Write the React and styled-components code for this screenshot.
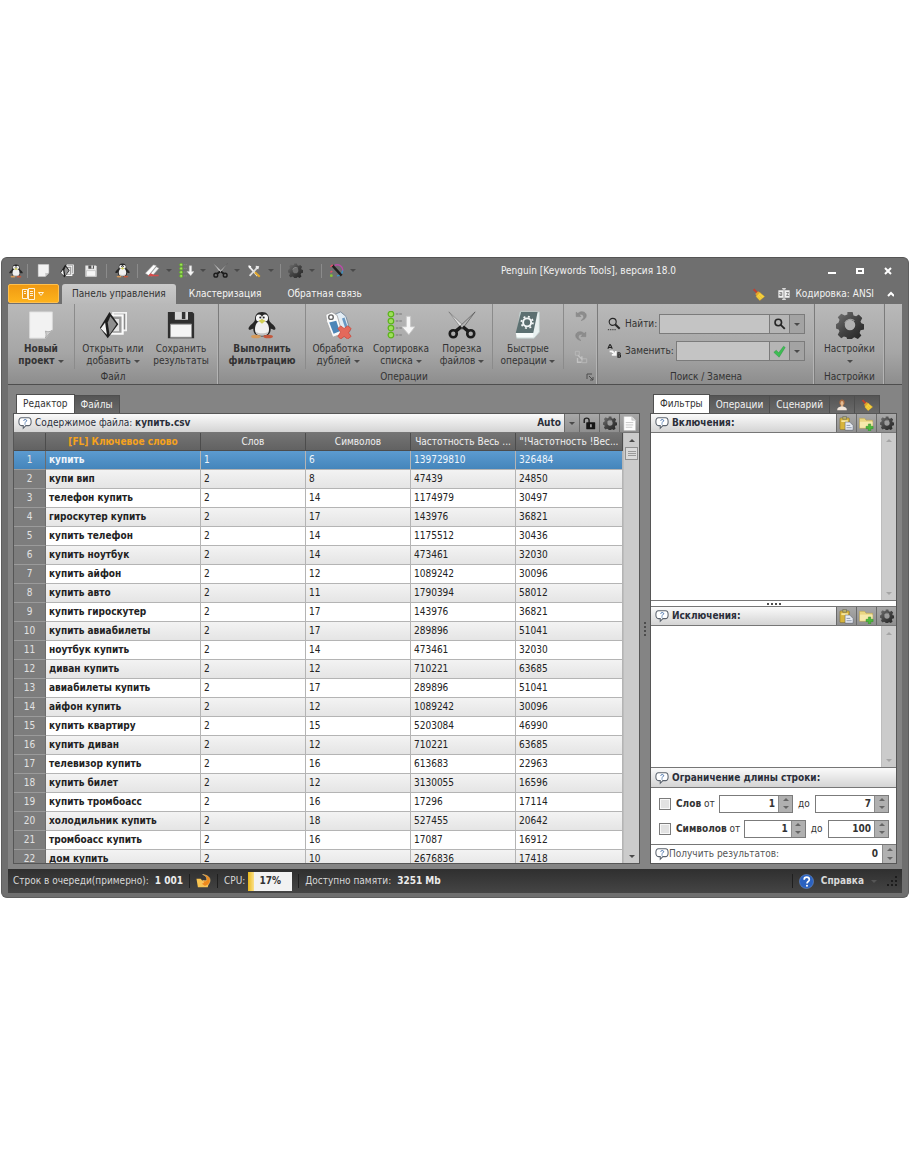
import { useState } from "react";
import styled, { createGlobalStyle, css } from "styled-components";

const GlobalStyle = createGlobalStyle`
  * {
    box-sizing: border-box;
  }
  body {
    margin: 0;
    background: #fff;
  }
  body, button, input, textarea {
    font-family: "DejaVu Sans Condensed", "DejaVu Sans", sans-serif;
    font-size: 10px;
    line-height: 12px;
  }
  button {
    margin: 0;
    padding: 0;
    border: 0;
    background: none;
    color: inherit;
  }
  svg {
    display: block;
    flex: none;
  }
`;

const KEYWORDS = [
  ["купить", 1, 6, 139729810, 326484],
  ["купи вип", 2, 8, 47439, 24850],
  ["телефон купить", 2, 14, 1174979, 30497],
  ["гироскутер купить", 2, 17, 143976, 36821],
  ["купить телефон", 2, 14, 1175512, 30436],
  ["купить ноутбук", 2, 14, 473461, 32030],
  ["купить айфон", 2, 12, 1089242, 30096],
  ["купить авто", 2, 11, 1790394, 58012],
  ["купить гироскутер", 2, 17, 143976, 36821],
  ["купить авиабилеты", 2, 17, 289896, 51041],
  ["ноутбук купить", 2, 14, 473461, 32030],
  ["диван купить", 2, 12, 710221, 63685],
  ["авиабилеты купить", 2, 17, 289896, 51041],
  ["айфон купить", 2, 12, 1089242, 30096],
  ["купить квартиру", 2, 15, 5203084, 46990],
  ["купить диван", 2, 12, 710221, 63685],
  ["телевизор купить", 2, 16, 613683, 22963],
  ["купить билет", 2, 12, 3130055, 16596],
  ["купить тромбоасс", 2, 16, 17296, 17114],
  ["холодильник купить", 2, 18, 527455, 20642],
  ["тромбоасс купить", 2, 16, 17087, 16912],
  ["дом купить", 2, 10, 2676836, 17418],
];

/* ---------- icons ---------- */

const Svg = ({ size = 32, box = 32, children }) => (
  <svg width={size} height={size} viewBox={`0 0 ${box} ${box}`} aria-hidden="true">
    {children}
  </svg>
);

const Penguin = ({ size }) => (
  <Svg size={size}>
    <path d="M16 1c-6 0-8 4-8 8 0 3-2 4-5 7-2 2-3 4-2 5s3 0 5-1c0 6 3 9 10 9s10-3 10-9c2 1 4 2 5 1s0-3-2-5c-3-3-5-4-5-7 0-4-2-8-8-8z" fill="#262626" />
    <path d="M16 11c-6 0-8 5-8 10 0 5 3 7 8 7s8-2 8-7c0-5-2-10-8-10z" fill="#f0f0f0" />
    <path d="M9 24c1 3 4 4 7 4s6-1 7-4c-4 2-10 2-14 0z" fill="#c2c2c2" />
    <ellipse cx="12.5" cy="8" rx="3.4" ry="4" fill="#f6f6f6" />
    <ellipse cx="19.5" cy="8" rx="3.4" ry="4" fill="#f6f6f6" />
    <circle cx="14" cy="7.5" r="1.1" fill="#222" />
    <circle cx="18" cy="7.5" r="1.1" fill="#222" />
    <path d="M12 11l4-2 4 2-4 3.5z" fill="#d2cf55" />
    <ellipse cx="9" cy="29" rx="5.5" ry="2" fill="#d59a5a" />
    <ellipse cx="23" cy="29" rx="5.5" ry="2" fill="#c4583c" />
  </Svg>
);

const Page = ({ size }) => (
  <Svg size={size}>
    <path d="M3 1h26v21l-8 9H3z" fill="#f2f2f2" stroke="#dadada" />
    <path d="M29 22l-8 9c1-3 1-5 0-8 3 1 5 1 8-1z" fill="#cfcfcf" stroke="#a5a5a5" />
  </Svg>
);

const Folder = ({ size }) => (
  <Svg size={size}>
    <path d="M16 2h15v20H16z" fill="#8a8a8a" stroke="#f2f2f2" strokeWidth="2" />
    <path d="M14 5h13v21H14z" fill="#9b9b9b" stroke="#fafafa" strokeWidth="2.5" />
    <path d="M16 9h7v14h-7z" fill="#e6e6e6" />
    <path d="M12 1l10 14-12 16L1 19z" fill="#1e1e1e" />
    <path d="M13 6l7 9-8 12-2-14z" fill="#8f8f8f" />
    <path d="M2 20l5-7 2 14z" fill="#f2f2f2" />
  </Svg>
);

const Floppy = ({ size, light }) => (
  <Svg size={size}>
    <path d="M1 1h28l2 2v28H1z" fill={light ? "#e8e8e8" : "#2f2f2f"} />
    <path d="M9 1h15v9H9z" fill={light ? "#555" : "#d8d8d8"} />
    <path d="M17 1h4v8h-4z" fill={light ? "#eee" : "#333"} />
    <path d="M4 15h24v15H4z" fill="#f5f5f5" stroke="#999" />
  </Svg>
);

const Tags = ({ size }) => (
  <Svg size={size}>
    <path d="M12 4l7-3 6 5 5 17-9 4z" fill="#e2ecf4" stroke="#76879a" />
    <path d="M2 4l7-3 6 4 6 21-11 4L3 12z" fill="#fafafa" stroke="#a8a8a8" />
    <circle cx="8" cy="7" r="2.6" fill="#fff" stroke="#666" strokeWidth="1.6" />
    <path d="M6 13l8-2 4 12-7 3z" fill="#4d86b8" />
    <path d="M22 8l4 12" stroke="#6898c4" strokeWidth="3" />
    <path d="M16 20l3-3 4 3 4-3 4 3-3 5 3 4-4 3-4-3-4 3-3-3 3-5z" fill="#e4695b" stroke="#cb4f43" />
  </Svg>
);

const SortList = ({ size }) => (
  <Svg size={size}>
    {[3.5, 11.5, 19.5, 27.5].map((y) => (
      <g key={y}>
        <circle cx="4.5" cy={y} r="3.2" fill="#9fe05c" stroke="#5cb31d" strokeWidth="1.4" />
        <path d={`M10 ${y}h7`} stroke="#8a8a8a" strokeWidth="1.6" strokeDasharray="3 1" />
      </g>
    ))}
    <path d="M22 6h5v12h5l-7 9-8-9h5z" fill="#f6f6f6" stroke="#c4c4c4" />
  </Svg>
);

const Scissors = ({ size }) => (
  <Svg size={size}>
    <path d="M1 1l18 17-3 3z" fill="#e0e0e0" stroke="#777" strokeWidth=".8" />
    <path d="M31 1L13 18l3 3z" fill="#b5b5b5" stroke="#555" strokeWidth=".8" />
    <path d="M17 18l6 5M15 18l-6 5" stroke="#1c1c1c" strokeWidth="4" />
    <ellipse cx="6" cy="26" rx="4" ry="4" fill="none" stroke="#1c1c1c" strokeWidth="3" />
    <ellipse cx="26" cy="26" rx="4" ry="4" fill="none" stroke="#1c1c1c" strokeWidth="3" />
  </Svg>
);

const Script = ({ size }) => (
  <Svg size={size}>
    <path d="M7 1h22v23l-6 7H3z" fill="#e9f1f0" stroke="#c0cfcd" />
    <path d="M8 1h19l-5 24H2z" fill="#5c7071" />
    <path d="M2 25h20v5H3z" fill="#f7fbfa" />
    <circle cx="15" cy="13" r="4.6" fill="none" stroke="#f4f8f8" strokeWidth="2.2" />
    <circle cx="15" cy="13" r="6.6" fill="none" stroke="#f4f8f8" strokeWidth="2" strokeDasharray="2.2 3" />
  </Svg>
);

const Gear = ({ size }) => (
  <Svg size={size}>
    <linearGradient id="steel" x1="0" y1="0" x2="1" y2="1">
      <stop offset="0" stopColor="#747474" />
      <stop offset=".5" stopColor="#424242" />
      <stop offset="1" stopColor="#222" />
    </linearGradient>
    <path
      d="M13 1h6l1 4 3 1 3-2 4 4-2 4 1 2 3 1v6l-4 1-1 3 2 3-4 4-4-2-2 1-1 2h-5l-1-3-3-1-3 2-4-4 2-4-1-2-3-1v-5l3-2 1-3-2-3 4-4 4 2 3-1zM16 10a6 6 0 1 0 0 12 6 6 0 1 0 0-12z"
      fill="url(#steel)"
      fillRule="evenodd"
    />
    <path d="M10 14a7 7 0 0 1 11-3" fill="none" stroke="#a8a8a8" strokeWidth="1.2" />
  </Svg>
);

const Eraser = ({ size }) => (
  <Svg size={size}>
    <path d="M1 22L18 4l6 2L8 26z" fill="#fff" stroke="#ccc" />
    <path d="M9 26L24 8l6 3-15 17z" fill="#f3f3f3" stroke="#888" />
    <path d="M6 28l6-6 7 3h10v3H16z" fill="#d64b4b" />
  </Svg>
);

const Tools = ({ size }) => (
  <Svg size={size}>
    <path d="M4 5l20 22" stroke="#ededed" strokeWidth="4" />
    <path d="M3 3l7 2-4 5z" fill="#fff" />
    <path d="M6 27L22 10" stroke="#dcdcdc" strokeWidth="4" />
    <path d="M20 4l8 1-2 7-6-1z" fill="#e8e8e8" />
    <path d="M18 19l11 10" stroke="#e0a72e" strokeWidth="5" />
  </Svg>
);

const Wand = ({ size }) => (
  <Svg size={size}>
    <path d="M12 5a12 11 0 0 1 17 12" fill="none" stroke="#ba4ba8" strokeWidth="3" />
    <path d="M29 16a11 11 0 0 1-12 11" fill="none" stroke="#3d91c4" strokeWidth="3" />
    <path d="M7 5l20 22" stroke="#202020" strokeWidth="5" />
    <path d="M3 8l5-4M3 20l4-3" stroke="#e74b69" strokeWidth="3" />
    <circle cx="5" cy="27" r="3" fill="#88c337" />
  </Svg>
);

const Broom = ({ size }) => (
  <Svg size={size}>
    <path d="M4 3l9 9" stroke="#c2402f" strokeWidth="5" />
    <path d="M15 8l7 5-9 9-5-7z" fill="#e3a02c" />
    <path d="M19 11l12 10-12 10-9-10z" fill="#f7d23c" stroke="#d9a428" />
    <path d="M14 20l6 7M18 17l6 7" stroke="#d9a428" />
  </Svg>
);

const Person = ({ size }) => (
  <Svg size={size}>
    <ellipse cx="16" cy="9" rx="7" ry="8" fill="#a8693f" />
    <ellipse cx="16" cy="11" rx="4" ry="6" fill="#e2bb92" />
    <path d="M13 15h6v6h-6z" fill="#d9a97c" />
    <path d="M3 30c0-7 5-9 10-10h6c5 1 10 3 10 10z" fill="#f1e6dc" />
  </Svg>
);

const Help = ({ size = 14 }) => (
  <Svg size={size} box={16}>
    <path d="M4 2h8c2 0 3 2 3 4.500s-1 4.500-3 4.500H9l-3 3v-3H4c-2 0-3-2-3-4.500S2 2 4 2z" fill="#fff" stroke="#5b636e" strokeWidth="1.200" />
    <path d="M6.500 5.500c0-2 3.500-2 3.500 0 0 1-2 1-2 2" fill="none" stroke="#3f6ca8" />
    <circle cx="8" cy="9" r=".7" fill="#3f6ca8" />
  </Svg>
);

const Clipboard = ({ size }) => (
  <Svg size={size}>
    <rect x="2" y="4" width="20" height="25" rx="2" fill="#d8b53c" stroke="#7b651d" />
    <path d="M8 1h8v6H8z" fill="#b8b06b" stroke="#555" />
    <path d="M5 9h14v4H5z" fill="#f7e7a0" />
    <path d="M13 13h10l7 7v10H13z" fill="#e9edf4" stroke="#4f586c" />
    <path d="M16 20h8M16 25h11" stroke="#8893aa" strokeWidth="2" />
  </Svg>
);

const FolderAdd = ({ size }) => (
  <Svg size={size}>
    <path d="M1 5h11l3 4h14v17H1z" fill="#ead682" stroke="#b89e45" />
    <path d="M2 12h27v13H2z" fill="#f6e9ac" />
    <path d="M20 17h5v5h5v5h-5v5h-5v-5h-5v-5h5z" fill="#4cb83b" stroke="#2f8b26" />
  </Svg>
);

const Lock = ({ size }) => (
  <Svg size={size}>
    <path d="M3 15V8c0-7 12-7 12 0v7" fill="none" stroke="#202020" strokeWidth="3.5" />
    <rect x="8" y="13" width="22" height="17" rx="1" fill="#151515" />
    <path d="M18 18h3v7h-3z" fill="#ddd" />
  </Svg>
);

const Doc = ({ size }) => (
  <Svg size={size}>
    <path d="M4 1h17l8 8v22H4z" fill="#fdfdfd" stroke="#bbb" />
    <path d="M21 1v8h8" fill="#ddd" stroke="#aaa" />
    <path d="M8 14h16M8 19h16M8 24h14" stroke="#c5c5c5" strokeWidth="2" />
  </Svg>
);

const Loupe = ({ size, dots }) => (
  <Svg size={size}>
    <circle cx="13" cy="11" r="8" fill="none" stroke="#262626" strokeWidth={dots ? 2.6 : 4} />
    <path d="M19 17l10 10" stroke="#262626" strokeWidth="4.5" />
    {dots && <path d="M2 29h20" stroke="#262626" strokeWidth="2" strokeDasharray="3 2" />}
  </Svg>
);

const Replace = ({ size }) => (
  <Svg size={size}>
    <path d="M2 11l4-9h2l4 9M4 8h6" fill="none" stroke="#222" strokeWidth="2.5" />
    <path d="M6 15h7l5 5v-4h4v11H11v-4h4l-5-4H6z" fill="#f7f7f7" />
    <path d="M25 20h3c3 0 3 5 0 5h-3zM25 25h4c3 0 3 5 0 5h-4z" fill="none" stroke="#222" strokeWidth="2.5" />
  </Svg>
);

const Check = ({ size }) => (
  <Svg size={size}>
    <path d="M2 18l6-5 6 6L26 3l4 3-15 24z" fill="#3ebd54" stroke="#219039" />
  </Svg>
);

const Undo = ({ size, flip }) => (
  <Svg size={size}>
    <path
      d="M5 5v10h11l-4-4c6-3 11 1 10 6-1 3-3 5-6 7 7-1 13-6 12-13C26 3 15 1 9 8z"
      fill="#8d8d8d"
      stroke="#7d7d7d"
      transform={flip ? undefined : "translate(32 0) scale(-1 1)"}
    />
  </Svg>
);

const Swap = ({ size }) => (
  <Svg size={size}>
    <path d="M3 3h9v9H3zM18 20h11v9H18z" fill="none" stroke="#b9b9b9" strokeWidth="2" />
    <path d="M9 12l9 9v-7M8 18v10h9" fill="none" stroke="#c2c2c2" strokeWidth="3" />
  </Svg>
);

const CodePage = ({ size }) => (
  <Svg size={size}>
    <path d="M1 6h13v20H1zM18 6h13v20H18z" fill="#f0f0f0" />
    <path d="M16 2v28M11 2h10M11 30h10" stroke="#fff" strokeWidth="2.5" />
    <path d="M4 12h6v8H5v-4h5M22 12h6l-5 8h6" fill="none" stroke="#666" strokeWidth="2" />
  </Svg>
);

const AppMenu = () => (
  <svg width="23" height="12" viewBox="0 0 23 12" aria-hidden="true">
    <path d="M.5 1.500h5v9h-5zM6.500 .5h6v11h-6z" fill="#ee9a15" stroke="#fff3d8" />
    <path d="M8 3.500h3M8 5.500h3M8 7.500h3" stroke="#fff3d8" />
    <path d="M2 3.500h2M2 5.500h2" stroke="#fff3d8" />
    <path d="M16.500 4.500h5l-2.500 3z" fill="#f2a627" stroke="#fff3d8" />
  </svg>
);

const Run = ({ size }) => (
  <Svg size={size}>
    <path d="M1 10h9l3 4h16l-4 14H4z" fill="#f8c451" />
    <path d="M14 1c10 1 17 6 16 14-1 6-5 10-11 11l-9-6 6-1-1-5c5 2 8 1 8-3 0-5-4-8-9-10z" fill="#ee8a1c" stroke="#ffd98a" />
  </Svg>
);

const HelpBall = ({ size }) => (
  <Svg size={size}>
    <circle cx="16" cy="16" r="15" fill="#2b62c0" stroke="#7da3e0" />
    <path d="M11 12c0-7 11-7 11 0 0 4-5 4-5 8" fill="none" stroke="#fff" strokeWidth="3.5" />
    <circle cx="17" cy="25" r="2.2" fill="#fff" />
  </Svg>
);

const Launcher = () => (
  <svg width="8" height="8" viewBox="0 0 8 8" aria-hidden="true">
    <path d="M1 6V1h5M3 3l4 4M7 4v3H4" fill="none" stroke="#4c4c4c" />
  </svg>
);

const SizeGrip = () => (
  <svg width="10" height="10" viewBox="0 0 10 10" aria-hidden="true">
    <path d="M8 0h2v2H8zM4 4h2v2H4zM8 4h2v2H8zM0 8h2v2H0zM4 8h2v2H4zM8 8h2v2H8z" fill="#1c1c1c" />
  </svg>
);

/* ---------- window frame ---------- */

const Screen = styled.main`
  padding: 257px 1px;
`;

const Frame = styled.div`
  padding: 0 6px 4px;
  border-radius: 6px;
  border: 1px solid #5e5e5e;
  border-top-color: #555;
  background: #6f6f6f;
  color: #f2f2f2;
  overflow: hidden;
`;

const TitleBar = styled.header`
  display: flex;
  align-items: center;
  height: 25px;
`;

const QuickBar = styled.div`
  display: flex;
  align-items: center;
`;

const QuickButton = styled.button`
  display: flex;
  align-items: center;
  justify-content: center;
  width: ${(p) => (p.$menu ? 22 : 24)}px;
  height: 20px;
  &:first-child {
    width: 16px;
  }
`;

const Arrow = styled.i`
  display: inline-block;
  border: solid transparent;
  border-width: ${(p) => (p.$up ? "0 3px 3px" : "3px 3px 0")};
  border-top-color: ${(p) => p.$color || "#4a4a4a"};
  border-bottom-color: ${(p) => p.$color || "#4a4a4a"};
  vertical-align: middle;
`;

const QuickArrow = styled.button`
  width: 12px;
  height: 20px;
  line-height: 10px;
`;

const Divider = styled.span`
  width: 1px;
  height: 14px;
  margin: 0 3px;
  background: #8b8b8b;
`;

const WindowTitle = styled.h1`
  flex: 1;
  margin: 0;
  font-size: 10px;
  font-weight: 400;
  text-align: center;
`;

const WindowButtons = styled.div`
  display: flex;
`;

const WindowButton = styled.button`
  display: flex;
  align-items: center;
  justify-content: center;
  width: 28px;
  height: 20px;
`;

const TabBar = styled.nav`
  display: flex;
  align-items: flex-end;
  height: 21px;
`;

const AppButton = styled.button`
  display: flex;
  align-items: center;
  justify-content: center;
  width: 51px;
  height: 19px;
  margin: 0 3px 1px 0;
  border: 1px solid #ffc04d;
  border-radius: 2px;
  background: linear-gradient(#f09a12, #fdb21c);
`;

const RibbonTab = styled.button`
  height: 20px;
  padding: 0 ${(p) => (p.$active ? 10 : 13)}px;
  border-radius: 3px 3px 0 0;
  color: #f4f4f4;
  ${(p) =>
    p.$active &&
    css`
      color: #333;
      background: linear-gradient(#cacaca, #b9b9b9);
    `}
`;

const TabTools = styled.div`
  display: flex;
  align-items: center;
  gap: 5px;
  height: 20px;
  margin-left: auto;
  padding-right: 4px;
`;

const ToolLink = styled.button`
  display: flex;
  align-items: center;
  gap: 5px;
  padding: 0 4px;
`;

/* ---------- ribbon ---------- */

const Ribbon = styled.section`
  display: flex;
  height: 81px;
  border-bottom: 1px solid #4e4e4e;
  background: linear-gradient(#b9b9b9, #a6a6a6 60%, #8d8d8d);
  color: #333;
`;

const Group = styled.div`
  display: flex;
  flex-direction: column;
  width: ${(p) => p.$width}px;
  border-right: 1px solid #7b7b7b;
  box-shadow: inset -1px 0 #b4b4b4;
`;

const GroupBody = styled.div`
  display: flex;
  flex: 1;
`;

const GroupCaption = styled.div`
  display: flex;
  align-items: center;
  height: 15px;
  padding: 0 3px;
  span {
    flex: 1;
    text-align: center;
  }
`;

const BigButton = styled.button`
  display: flex;
  flex-direction: column;
  align-items: center;
  gap: 4px;
  width: ${(p) => p.$width}px;
  padding-top: 7px;
  font-weight: ${(p) => (p.$bold ? 700 : 400)};
  white-space: nowrap;
  ${(p) =>
    p.$split &&
    css`
      border-right: 1px solid #8b8b8b;
    `}
`;

const Label = styled.span`
  line-height: 12px;
`;

const UndoColumn = styled.div`
  display: flex;
  flex: 1;
  flex-direction: column;
  align-items: center;
  gap: 6px;
  padding-top: 6px;
`;

const SearchForm = styled.div`
  display: flex;
  flex: 1;
  flex-direction: column;
  gap: 7px;
  padding: 10px 9px 0;
`;

const SearchRow = styled.div`
  display: flex;
  align-items: center;
  height: 20px;
  label {
    margin: 0 2px 0 4px;
  }
`;

const SearchInput = styled.input`
  flex: 1;
  min-width: 0;
  height: 20px;
  border: 1px solid #7b7b7b;
  background: #c4c4c4;
`;

const SearchButton = styled.button`
  display: flex;
  align-items: center;
  justify-content: center;
  width: ${(p) => (p.$small ? 15 : 20)}px;
  height: 20px;
  border: 1px solid #7b7b7b;
  border-left: 0;
  background: ${(p) => (p.$small ? "#a3a3a3" : "#b5b5b5")};
`;

/* ---------- work area ---------- */

const Work = styled.div`
  display: flex;
  padding: 9px 5px 5px;
  background: #848484;
`;

const EditorPane = styled.section`
  flex: 1;
  min-width: 0;
`;

const Splitter = styled.div`
  display: flex;
  align-items: center;
  justify-content: center;
  width: 10px;
`;

const SidePane = styled.section`
  width: 247px;
`;

const Tabs = styled.div`
  display: flex;
  align-items: flex-end;
  height: 19px;
  padding-left: 3px;
`;

const Tab = styled.button`
  display: flex;
  align-items: center;
  justify-content: center;
  height: ${(p) => (p.$active ? 19 : 18)}px;
  padding: 0 6px;
  border: 1px solid #4f4f4f;
  border-bottom: 0;
  border-left-width: ${(p) => (p.$active ? 1 : 0)}px;
  background: ${(p) => (p.$active ? "#fff" : "linear-gradient(#555, #6a6a6a)")};
  color: ${(p) => (p.$active ? "#333" : "#f2f2f2")};
`;

const Box = styled.div`
  height: 451px;
  border: 1px solid #565656;
  background: #fff;
  color: #333;
  overflow: hidden;
`;

const SideBox = styled(Box)`
  display: flex;
  flex-direction: column;
`;

const PanelHead = styled.div`
  display: flex;
  flex: none;
  align-items: center;
  gap: 3px;
  height: ${(p) => (p.$ruled ? 21 : 19)}px;
  padding-left: 4px;
  border-top: ${(p) => (p.$ruled ? 1 : 0)}px solid #767676;
  border-bottom: 1px solid #767676;
  background: linear-gradient(#fafafa, #d4d4d4);
  color: #2b2f3a;
`;

const HeadText = styled.div`
  flex: 1;
  font-weight: ${(p) => (p.$bold ? 700 : 400)};
`;

const HeadTools = styled.div`
  display: flex;
  height: 100%;
`;

const HeadButton = styled.button`
  display: flex;
  align-items: center;
  justify-content: center;
  width: ${(p) => (p.$small ? 15 : 20)}px;
  border-left: 1px solid #6a6a6a;
  background: linear-gradient(#a8a8a8, #8f8f8f);
`;

const TableArea = styled.div`
  display: flex;
  height: 430px;
`;

const TableClip = styled.div`
  flex: 1;
  min-width: 0;
  overflow: hidden;
`;

const Table = styled.table`
  width: 100%;
  table-layout: fixed;
  border-collapse: separate;
  border-spacing: 0;
`;

const HeadCell = styled.th`
  height: 18px;
  padding: 0 3px;
  border-right: 1px solid #4c4c4c;
  border-bottom: 1px solid #4c4c4c;
  background: linear-gradient(#747474, #626262);
  color: ${(p) => (p.$accent ? "#f5a21d" : "#f0f0f0")};
  font-weight: ${(p) => (p.$accent ? 700 : 400)};
  text-align: center;
  white-space: nowrap;
`;

const Row = styled.tr`
  height: 19px;
  background: ${(p) => (p.$even ? "linear-gradient(#f3f3f3, #e4e4e4)" : "#fff")};
  color: #222;
  ${(p) =>
    p.$selected &&
    css`
      background: linear-gradient(#5c9bd0, #4384ba);
      color: #eef5fb;
    `}
`;

const Cell = styled.td`
  padding: 0 3px;
  border-right: 1px solid #b4b4b4;
  border-bottom: 1px solid #b4b4b4;
  font-weight: ${(p) => (p.$bold ? 700 : 400)};
`;

const RowNumber = styled.th`
  padding: 0;
  border-right: 1px solid #6c6c6c;
  border-bottom: 1px solid #9b9b9b;
  background: ${(p) => (p.$selected ? "transparent" : "#7d7d7d")};
  color: #e2e2e2;
  font-weight: 400;
  text-align: center;
`;

const ScrollBar = styled.div`
  display: flex;
  flex: none;
  flex-direction: column;
  justify-content: space-between;
  width: ${(p) => p.$width || 16}px;
  background: #cbcbcb;
  border-left: 1px solid #bdbdbd;
`;

const ScrollButton = styled.button`
  width: 100%;
  height: 14px;
  line-height: 8px;
`;

const Thumb = styled.div`
  display: flex;
  align-items: center;
  justify-content: center;
  height: 13px;
  margin: 0 1px;
  border: 1px solid #8f8f8f;
  background: #dadada;
`;

const EditArea = styled.div`
  display: flex;
  flex: ${(p) => p.$grow};
  min-height: 0;
  textarea {
    flex: 1;
    min-width: 0;
    border: 0;
    resize: none;
    outline: 0;
  }
`;

const Grip = styled.div`
  display: flex;
  flex: none;
  align-items: center;
  justify-content: center;
  height: 7px;
  border: solid #767676;
  border-width: 1px 0;
`;

const Limits = styled.div`
  display: flex;
  flex: none;
  flex-direction: column;
  gap: 6px;
  padding: 6px 7px;
  border-bottom: 1px solid #767676;
`;

const LimitRow = styled.div`
  display: flex;
  align-items: center;
  height: 19px;
`;

const CheckLabel = styled.label`
  display: flex;
  flex: none;
  align-items: center;
  gap: 3px;
`;

const CheckBox = styled.input`
  appearance: none;
  width: 12px;
  height: 12px;
  margin: 0 2px 0 1px;
  border: 1px solid #7b7b7b;
  background: #e2e2e2;
  box-shadow: inset 0 0 0 1px #f8f8f8;
`;

const To = styled.span`
  margin: 0 5px;
`;

const SpinBox = styled.div`
  display: flex;
  flex: 1;
  min-width: 0;
  height: 18px;
  margin-left: ${(p) => (p.$gap ? 4 : 0)}px;
  border: 1px solid #7b7b7b;
  input {
    flex: 1;
    width: 0;
    min-width: 0;
    padding: 0 3px;
    border: 0;
    background: #fff;
    color: #333;
    font-weight: 700;
    text-align: right;
  }
`;

const SpinButtons = styled.div`
  display: flex;
  flex-direction: column;
  width: 14px;
  border-left: 1px solid #8b8b8b;
  background: #b0b0b0;
  button {
    flex: 1;
    line-height: 4px;
  }
`;

const ResultRow = styled.div`
  display: flex;
  flex: none;
  align-items: center;
  height: 18px;
  padding-left: 4px;
  color: #555;
  label {
    flex: none;
  }
  input {
    flex: 1;
    min-width: 0;
    padding: 0 4px;
    border: 0;
    color: #333;
    font-weight: 700;
    text-align: right;
  }
  ${SpinButtons} {
    height: 100%;
  }
`;

/* ---------- status bar ---------- */

const StatusBar = styled.footer`
  display: flex;
  align-items: center;
  height: 24px;
  padding: 0 5px;
  background: linear-gradient(#2f2f2f, #454545);
  color: #d8d8d8;
  b {
    margin-left: 6px;
    color: #ececec;
  }
`;

const StatusDivider = styled.span`
  width: 1px;
  height: 14px;
  margin: 0 6px;
  background: #1f1f1f;
`;

const Spacer = styled.span`
  flex: 1;
`;

const CpuMeter = styled.div`
  display: flex;
  align-items: center;
  justify-content: center;
  width: 44px;
  height: 19px;
  margin-left: 3px;
  background: linear-gradient(90deg, #e9b91c, #fbe08a 6px, #f2f2f2 6px);
  color: #333;
  font-weight: 700;
`;

const HelpButton = styled.button`
  display: flex;
  align-items: center;
  gap: 7px;
  margin-right: 10px;
  font-weight: 700;
`;

/* ---------- parts ---------- */

const Dots = ({ vertical }) => (
  <svg width={vertical ? 2 : 14} height={vertical ? 14 : 2} aria-hidden="true">
    {[0, 4, 8, 12].map((n) => (
      <rect key={n} x={vertical ? 0 : n} y={vertical ? n : 0} width="2" height="2" fill="#4c4c4c" />
    ))}
  </svg>
);

const Spinner = () => (
  <SpinButtons>
    <button aria-label="Больше"><Arrow $up $color="#666" /></button>
    <button aria-label="Меньше"><Arrow $color="#666" /></button>
  </SpinButtons>
);

const Spin = ({ label, initial, gap }) => {
  const [value, setValue] = useState(initial);
  return (
    <SpinBox $gap={gap}>
      <input aria-label={label} value={value} onChange={(e) => setValue(e.target.value)} />
      <Spinner />
    </SpinBox>
  );
};

const Quick = ({ label, icon, menu }) => (
  <>
    <QuickButton aria-label={label} $menu={menu}>{icon}</QuickButton>
    {menu && <QuickArrow aria-label={`${label}: меню`}><Arrow /></QuickArrow>}
  </>
);

const RibbonButton = ({ icon, lines, menu, ...rest }) => (
  <BigButton {...rest}>
    {icon}
    <Label>
      {lines[0]}
      <br />
      {lines[1]}
      {menu && <> <Arrow /></>}
    </Label>
  </BigButton>
);

const ListEditor = ({ title, grow }) => (
  <>
    <PanelHead>
      <Help />
      <HeadText $bold>{title}:</HeadText>
      <HeadTools>
        <HeadButton aria-label="Вставить"><Clipboard size={15} /></HeadButton>
        <HeadButton aria-label="Добавить из файла"><FolderAdd size={15} /></HeadButton>
        <HeadButton aria-label="Параметры"><Gear size={14} /></HeadButton>
      </HeadTools>
    </PanelHead>
    <EditArea $grow={grow}>
      <textarea aria-label={title} />
      <ScrollBar $width={15}>
        <ScrollButton aria-label="Вверх"><Arrow $up $color="#a5a5a5" /></ScrollButton>
        <ScrollButton aria-label="Вниз"><Arrow $color="#a5a5a5" /></ScrollButton>
      </ScrollBar>
    </EditArea>
  </>
);

const KeywordTable = () => {
  const [selected, setSelected] = useState(0);
  return (
    <Table>
      <colgroup>
        <col width="32" />
        <col />
        <col width="105" />
        <col width="105" />
        <col width="105" />
        <col width="107" />
      </colgroup>
      <thead>
        <tr>
          <HeadCell />
          <HeadCell $accent>[FL] Ключевое слово</HeadCell>
          <HeadCell>Слов</HeadCell>
          <HeadCell>Символов</HeadCell>
          <HeadCell>Частотность Весь ...</HeadCell>
          <HeadCell>"!Частотность !Вес...</HeadCell>
        </tr>
      </thead>
      <tbody>
        {KEYWORDS.map(([name, ...numbers], i) => (
          <Row key={name} $even={i % 2 === 1} $selected={i === selected} onClick={() => setSelected(i)}>
            <RowNumber $selected={i === selected}>{i + 1}</RowNumber>
            <Cell $bold>{name}</Cell>
            {numbers.map((n, j) => (
              <Cell key={j}>{n}</Cell>
            ))}
          </Row>
        ))}
      </tbody>
    </Table>
  );
};

const App = () => (
  <Screen>
    <GlobalStyle />
    <Frame>
      <TitleBar>
        <QuickBar>
          <Quick label="Penguin" icon={<Penguin size={14} />} />
          <Divider />
          <Quick label="Новый проект" icon={<Page size={13} />} />
          <Quick label="Открыть" icon={<Folder size={14} />} />
          <Quick label="Сохранить" icon={<Floppy size={12} light />} />
          <Divider />
          <Quick label="Фильтрация" icon={<Penguin size={15} />} />
          <Divider />
          <Quick label="Дубли" icon={<Eraser size={15} />} menu />
          <Quick label="Сортировка" icon={<SortList size={15} />} menu />
          <Quick label="Порезка" icon={<Scissors size={15} />} menu />
          <Quick label="Инструменты" icon={<Tools size={14} />} menu />
          <Divider />
          <Quick label="Настройки" icon={<Gear size={15} />} menu />
          <Divider />
          <Quick label="Быстрые операции" icon={<Wand size={15} />} menu />
        </QuickBar>
        <WindowTitle>Penguin [Keywords Tools], версия 18.0</WindowTitle>
        <WindowButtons>
          <WindowButton aria-label="Свернуть">
            <svg width="8" height="8"><path d="M0 6h8" stroke="#fff" strokeWidth="2" /></svg>
          </WindowButton>
          <WindowButton aria-label="Развернуть">
            <svg width="8" height="8"><path d="M1 2h6v4H1z" fill="none" stroke="#fff" strokeWidth="2" /></svg>
          </WindowButton>
          <WindowButton aria-label="Закрыть">
            <svg width="8" height="8"><path d="M1 1l6 6M7 1L1 7" stroke="#fff" strokeWidth="2" /></svg>
          </WindowButton>
        </WindowButtons>
      </TitleBar>

      <TabBar>
        <AppButton aria-label="Меню"><AppMenu /></AppButton>
        <RibbonTab $active>Панель управления</RibbonTab>
        <RibbonTab>Кластеризация</RibbonTab>
        <RibbonTab>Обратная связь</RibbonTab>
        <TabTools>
          <ToolLink aria-label="Очистить"><Broom size={13} /></ToolLink>
          <ToolLink><CodePage size={12} />Кодировка: ANSI</ToolLink>
          <ToolLink aria-label="Свернуть ленту">
            <svg width="7" height="6"><path d="M1 5l3-3 3 3" fill="none" stroke="#fff" strokeWidth="2" /></svg>
          </ToolLink>
        </TabTools>
      </TabBar>

      <Ribbon>
        <Group $width={211}>
          <GroupBody>
            <RibbonButton $width={67} $bold $split menu icon={<Page size={28} />} lines={["Новый", "проект"]} />
            <RibbonButton $width={76} menu icon={<Folder size={28} />} lines={["Открыть или", "добавить"]} />
            <RibbonButton $width={60} icon={<Floppy size={28} />} lines={["Сохранить", "результаты"]} />
          </GroupBody>
          <GroupCaption><span>Файл</span></GroupCaption>
        </Group>
        <Group $width={379}>
          <GroupBody>
            <RibbonButton $width={87} $bold $split icon={<Penguin size={28} />} lines={["Выполнить", "фильтрацию"]} />
            <RibbonButton $width={64} menu icon={<Tags size={28} />} lines={["Обработка", "дублей"]} />
            <RibbonButton $width={62} menu icon={<SortList size={28} />} lines={["Сортировка", "списка"]} />
            <RibbonButton $width={61} $split menu icon={<Scissors size={28} />} lines={["Порезка", "файлов"]} />
            <RibbonButton $width={71} $split menu icon={<Script size={28} />} lines={["Быстрые", "операции"]} />
            <UndoColumn>
              <button aria-label="Отменить"><Undo size={14} flip /></button>
              <button aria-label="Повторить"><Undo size={14} /></button>
              <button aria-label="Заменить"><Swap size={14} /></button>
            </UndoColumn>
          </GroupBody>
          <GroupCaption>
            <span>Операции</span>
            <button aria-label="Параметры операций"><Launcher /></button>
          </GroupCaption>
        </Group>
        <Group $width={217}>
          <SearchForm>
            <SearchRow>
              <Loupe size={14} dots />
              <label htmlFor="find">Найти:</label>
              <SearchInput id="find" />
              <SearchButton aria-label="Найти"><Loupe size={13} /></SearchButton>
              <SearchButton $small aria-label="История поиска"><Arrow /></SearchButton>
            </SearchRow>
            <SearchRow>
              <Replace size={14} />
              <label htmlFor="replace">Заменить:</label>
              <SearchInput id="replace" />
              <SearchButton aria-label="Заменить"><Check size={13} /></SearchButton>
              <SearchButton $small aria-label="История замены"><Arrow /></SearchButton>
            </SearchRow>
          </SearchForm>
          <GroupCaption><span>Поиск / Замена</span></GroupCaption>
        </Group>
        <Group $width={70}>
          <GroupBody>
            <RibbonButton $width={69} menu icon={<Gear size={28} />} lines={["Настройки", ""]} />
          </GroupBody>
          <GroupCaption><span>Настройки</span></GroupCaption>
        </Group>
      </Ribbon>

      <Work>
        <EditorPane>
          <Tabs>
            <Tab $active>Редактор</Tab>
            <Tab>Файлы</Tab>
          </Tabs>
          <Box>
            <PanelHead>
              <Help />
              <HeadText>Содержимое файла: <b>купить.csv</b></HeadText>
              <b>Auto</b>
              <HeadTools>
                <HeadButton $small aria-label="Режим"><Arrow /></HeadButton>
                <HeadButton aria-label="Блокировка"><Lock size={13} /></HeadButton>
                <HeadButton aria-label="Параметры"><Gear size={14} /></HeadButton>
                <HeadButton aria-label="Документ"><Doc size={15} /></HeadButton>
              </HeadTools>
            </PanelHead>
            <TableArea>
              <TableClip><KeywordTable /></TableClip>
              <ScrollBar>
                <div>
                  <ScrollButton aria-label="Вверх"><Arrow $up /></ScrollButton>
                  <Thumb>
                    <svg width="8" height="7"><path d="M0 1.500h8M0 3.500h8M0 5.500h8" stroke="#999" /></svg>
                  </Thumb>
                </div>
                <ScrollButton aria-label="Вниз"><Arrow /></ScrollButton>
              </ScrollBar>
            </TableArea>
          </Box>
        </EditorPane>
        <Splitter><Dots vertical /></Splitter>
        <SidePane>
          <Tabs>
            <Tab $active>Фильтры</Tab>
            <Tab>Операции</Tab>
            <Tab>Сценарий</Tab>
            <Tab aria-label="Пользователь"><Person size={12} /></Tab>
            <Tab aria-label="Очистка"><Broom size={12} /></Tab>
          </Tabs>
          <SideBox>
            <ListEditor title="Включения" grow={168} />
            <Grip><Dots /></Grip>
            <ListEditor title="Исключения" grow={141} />
            <PanelHead $ruled>
              <Help />
              <HeadText $bold>Ограничение длины строки:</HeadText>
            </PanelHead>
            <Limits>
              <LimitRow>
                <CheckLabel><CheckBox type="checkbox" /><b>Слов</b> от</CheckLabel>
                <Spin gap label="Слов от" initial="1" />
                <To>до</To>
                <Spin label="Слов до" initial="7" />
              </LimitRow>
              <LimitRow>
                <CheckLabel><CheckBox type="checkbox" /><b>Символов</b> от</CheckLabel>
                <Spin gap label="Символов от" initial="1" />
                <To>до</To>
                <Spin label="Символов до" initial="100" />
              </LimitRow>
            </Limits>
            <ResultRow>
              <Help />
              <label htmlFor="results">Получить результатов:</label>
              <input id="results" defaultValue="0" />
              <Spinner />
            </ResultRow>
          </SideBox>
        </SidePane>
      </Work>

      <StatusBar>
        <span>Строк в очереди(примерно):</span>
        <b>1 001</b>
        <StatusDivider />
        <Run size={15} />
        <StatusDivider />
        <span>CPU:</span>
        <CpuMeter>17%</CpuMeter>
        <StatusDivider />
        <span>Доступно памяти:</span>
        <b>3251 Mb</b>
        <Spacer />
        <StatusDivider />
        <HelpButton><HelpBall size={15} />Справка <Arrow $color="#555" /></HelpButton>
        <SizeGrip />
      </StatusBar>
    </Frame>
  </Screen>
);

export default App;
